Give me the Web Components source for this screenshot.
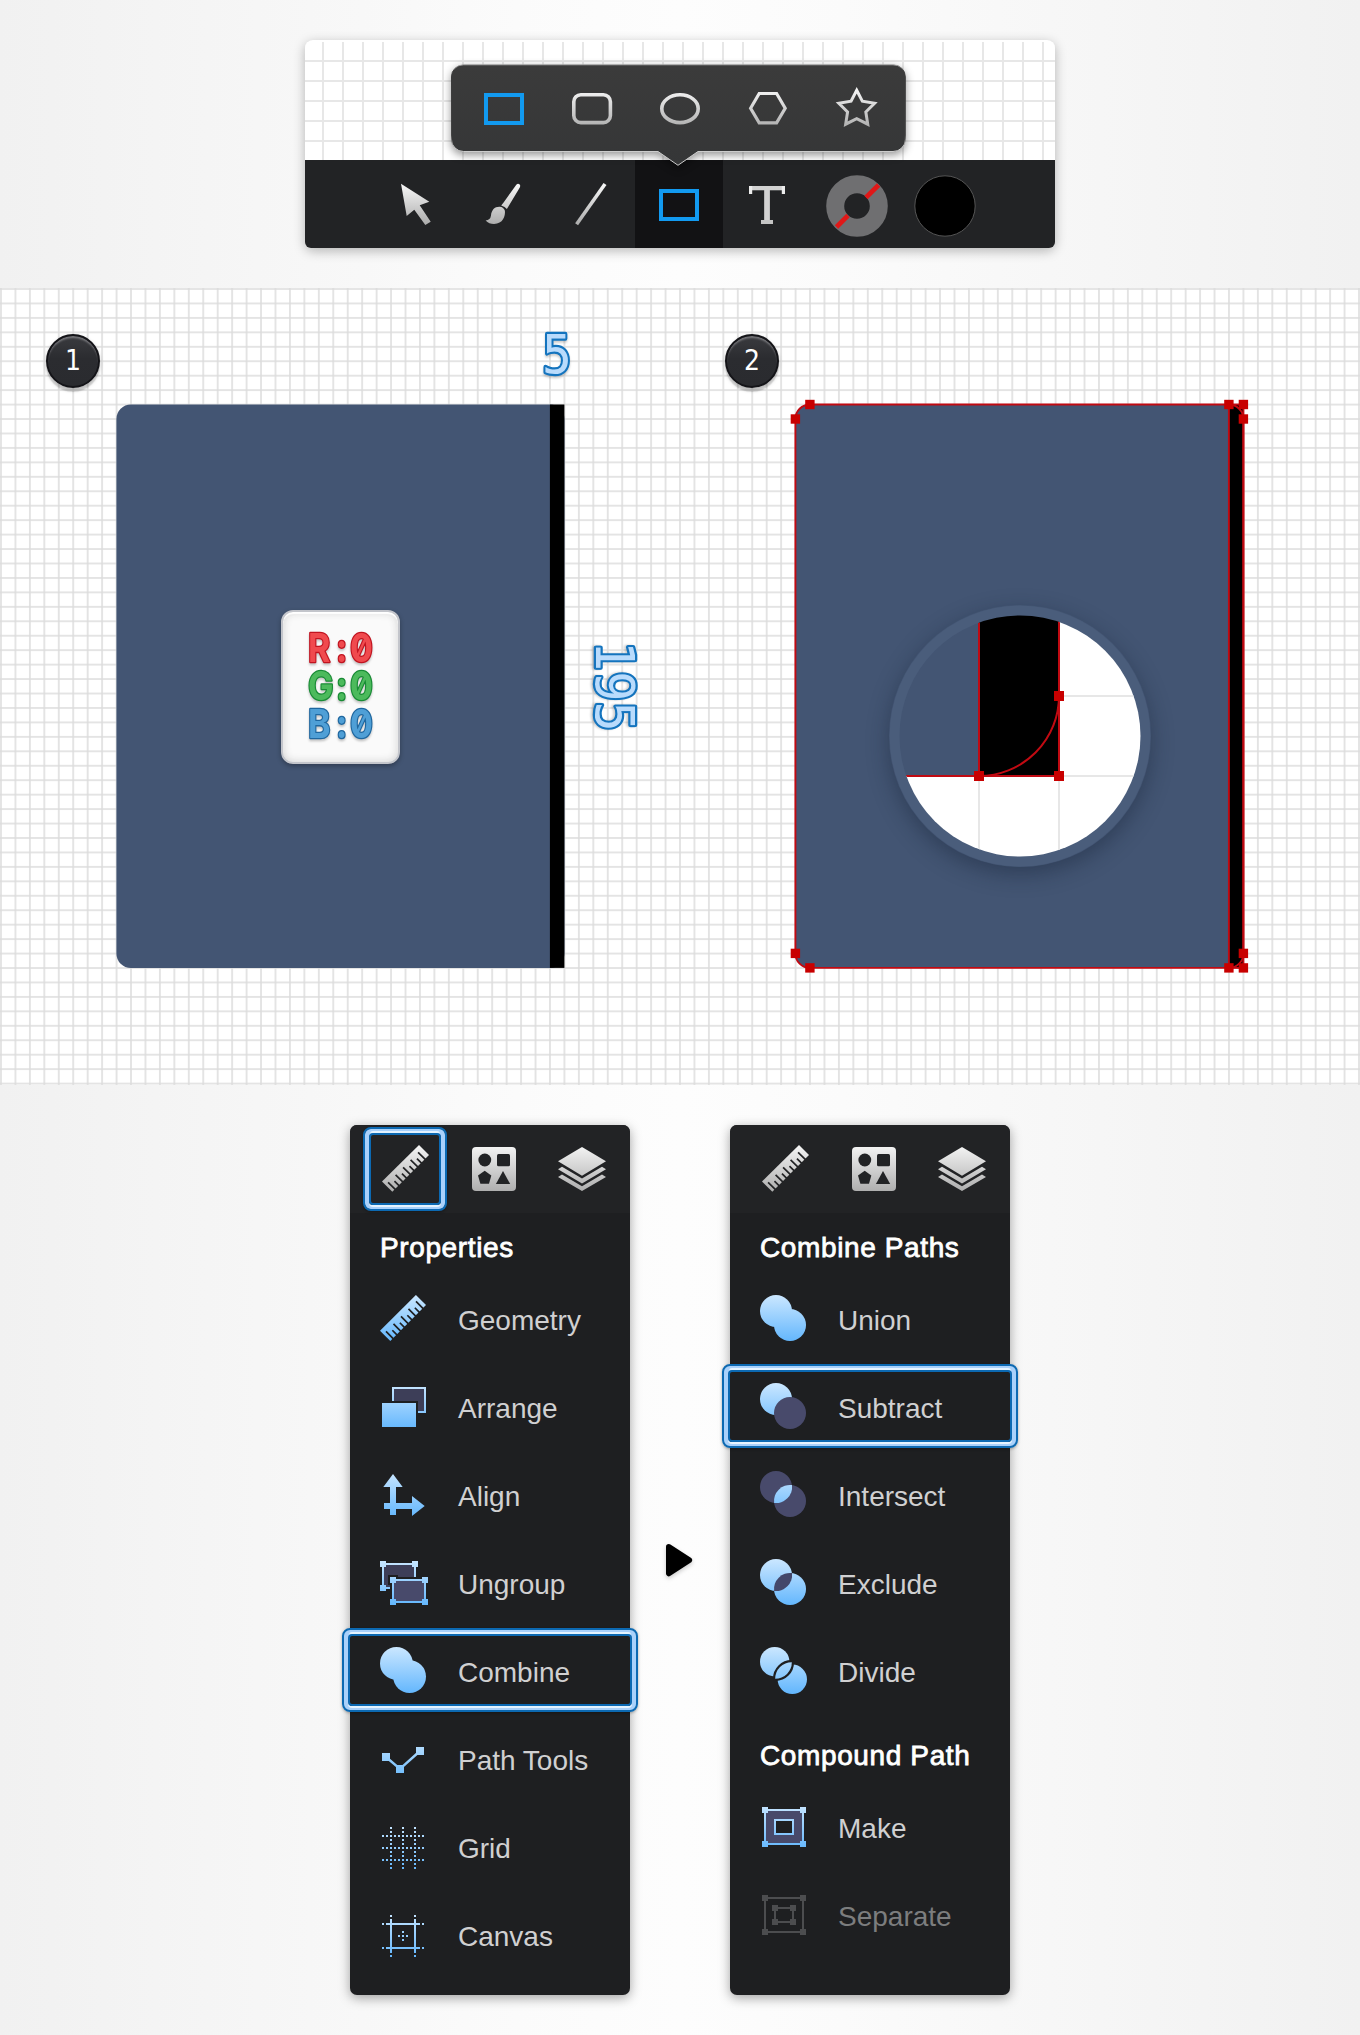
<!DOCTYPE html>
<html lang="en">
<head>
<meta charset="utf-8">
<title>Combine paths</title>
<style>
html{background:#f4f4f4}
body{margin:0;font-family:"Liberation Sans",Arial,sans-serif;background:linear-gradient(90deg,#f1f1f1 0,#fbfbfb 38%,#fdfdfd 50%,#fbfbfb 62%,#f1f1f1 100%)}
</style>
</head>
<body>
<tutorial-page></tutorial-page>
<script>
const define=(name,html,setup)=>customElements.define(name,class extends HTMLElement{
  connectedCallback(){
    if(this.shadowRoot)return;
    const root=this.attachShadow({mode:'open'});
    root.innerHTML=typeof html==='function'?html(this):html;
    if(setup)setup(this,root);
  }
});

const grads=(top,bottom)=>`<defs>
<linearGradient id="s" gradientUnits="userSpaceOnUse" x1="0" y1="${top}" x2="0" y2="${bottom}"><stop offset="0" stop-color="#f4f4f4"/><stop offset="1" stop-color="#adadad"/></linearGradient>
<linearGradient id="b" gradientUnits="userSpaceOnUse" x1="0" y1="${top}" x2="0" y2="${bottom}"><stop offset="0" stop-color="#cbe7ff"/><stop offset="1" stop-color="#64b7fd"/></linearGradient></defs>`;

const starPoints=()=>{
  const p=[];
  for(let i=0;i<10;i++){
    const r=i%2?9.6:18.8,a=-Math.PI/2+i*Math.PI/5;
    p.push((44.7+r*Math.cos(a)).toFixed(2)+','+(45+r*Math.sin(a)).toFixed(2));
  }
  return p.join(' ');
};
const ticks=(x,y)=>{
  let d='';
  for(let k=0;k<9;k++){
    const px=x+2.6+3.75*k,py=y-2.6-3.75*k,l=k%2?4.2:6.8;
    d+=`M${px+.6} ${py+.6}L${px-l} ${py-l}`;
  }
  return d;
};
const nodes=(list,s,fill)=>list.map(([x,y])=>`<rect x="${x-s/2}" y="${y-s/2}" width="${s}" height="${s}" fill="${fill}"/>`).join('');
const lens='M32 15.1A16 16 0 0 0 14.1 32.9A16 16 0 0 0 32 15.1Z';
const BG='#1e1f21';

const small={
  ruler:`<path d="M38 0L48 10L11.3 46.7L1 36.4Z" fill="url(#s)"/><path d="${ticks(11.3,46.7)}" stroke="#222325" stroke-width="1.7"/>`,
  shapes:`<rect x="2" y="2" width="44" height="44" rx="4" fill="url(#s)"/><g fill="#222325"><circle cx="14.8" cy="15" r="6.4"/><rect x="27" y="9" width="13" height="12.3" rx="1.5"/><path d="M14.7 25.7L21.3 30.6L19 38.8H10.4L8 30.6Z"/><path d="M33 26L40.2 39H25.9Z"/></g>`,
  layers:`<g fill="url(#s)"><path d="M24 2L48 16.3L24 30.7L0 16.3Z"/><path d="M0 24.3L4 21.8L24 33.6L44 21.8L48 24.3L24 38.4Z"/><path d="M0 32L4 29.5L24 41.3L44 29.5L48 32L24 46.1Z"/></g>`,
  geometry:`<path d="M35.9 1L46 10.9L10.3 47L0 36.8Z" fill="url(#b)"/><path d="${ticks(10.2,46.8)}" stroke="${BG}" stroke-width="1.7"/>`,
  arrange:`<rect x="13" y="6" width="32" height="24" fill="#3d3e58" stroke="url(#b)" stroke-width="2"/><rect x="0" y="19" width="38" height="28" fill="${BG}"/><rect x="2" y="21" width="34" height="24" fill="url(#b)"/>`,
  align:`<path d="M13 4L22.7 17H16V33H32V26L44.7 36L32 46V39H16V45H10V39H4V33H10V17H3.3Z" fill="url(#b)"/>`,
  ungroup:`<rect x="3" y="6" width="32" height="24" fill="#3d3e58" stroke="url(#b)" stroke-width="2"/>${nodes([[3,6],[35,6],[3,30]],6,'url(#b)')}<path d="M8 17H18V19H48V48H10V27H8Z" fill="${BG}"/><rect x="13" y="22" width="32" height="22" fill="#484a6b" stroke="url(#b)" stroke-width="2"/>${nodes([[13,22],[45,22],[13,44],[45,44]],6,'url(#b)')}`,
  combine:`<g fill="url(#b)"><circle cx="16.4" cy="17.4" r="16.4"/><circle cx="29.6" cy="30.6" r="16.4"/></g>`,
  paths:`<g><path d="M6 23L20 35L40 17" fill="none" stroke="url(#b)" stroke-width="2.4"/>${nodes([[6,23],[20,35],[40,17]],8,'url(#b)')}</g>`,
  grid:`<path d="M11 5V47M23 5V47M35 5V47M2 14.01H44M2 26.01H44M2 38.01H44" stroke="url(#b)" stroke-width="2" stroke-dasharray="2 2"/>`,
  canvas:`<g stroke="url(#b)" stroke-width="2"><path d="M11 9V43M35 9V43M6 14H40M6 38H40"/><path d="M11 5V7M11 45V47M35 5V7M35 45V47M2 14H4M42 14H44M2 38H4M42 38H44"/><path d="M18 26H28M23 21V31" stroke-dasharray="2 2"/></g>`,
  union:`<g fill="url(#b)"><circle cx="16" cy="17" r="16"/><circle cx="30" cy="31" r="16"/></g>`,
  subtract:`<circle cx="16" cy="17" r="16" fill="url(#b)"/><circle cx="30" cy="31" r="16" fill="#484a6b"/>`,
  intersect:`<g fill="#484a6b"><circle cx="16" cy="17" r="16"/><circle cx="30" cy="31" r="16"/></g><path d="${lens}" fill="url(#b)"/>`,
  exclude:`<g fill="url(#b)"><circle cx="16" cy="17" r="16"/><circle cx="30" cy="31" r="16"/></g><path d="${lens}" fill="#44476a"/>`,
  divide:`<g fill="url(#b)"><circle cx="14.7" cy="15.7" r="14.7"/><circle cx="32.3" cy="33.3" r="14.7"/></g><path d="M31.8 16.2A16.4 16.4 0 0 0 15.2 32.8A16.4 16.4 0 0 0 31.8 16.2Z" fill="url(#b)" stroke="${BG}" stroke-width="4.4" paint-order="stroke"/>`,
  make:`<path d="M5 8H43V42H5Z" fill="#484a6b" stroke="url(#b)" stroke-width="2"/><rect x="15" y="18" width="18" height="14" fill="${BG}" stroke="url(#b)" stroke-width="2"/>${nodes([[5,8],[43,8],[5,42],[43,42]],6,'url(#b)')}`,
  separate:`<g fill="none" stroke="#4c4d4f" stroke-width="2"><path d="M5 8H43V42H5Z"/><rect x="15" y="18" width="18" height="14"/></g>${nodes([[5,8],[43,8],[5,42],[43,42],[15,18],[33,18],[15,32],[33,32]],6,'#4c4d4f')}`
};
const large={
  rect:`<rect x="26" y="31" width="36" height="28" fill="none" stroke="#129af0" stroke-width="4"/>`,
  rounded:`<rect x="25.8" y="30.8" width="36.6" height="27.8" rx="7" fill="none" stroke="url(#s)" stroke-width="3.6"/>`,
  ellipse:`<ellipse cx="44" cy="44.7" rx="18.2" ry="13.9" fill="none" stroke="url(#s)" stroke-width="3.6"/>`,
  hexagon:`<path d="M26.6 44.2L35.2 29.5H52.6L61.2 44.2L52.6 58.8H35.2Z" fill="none" stroke="url(#s)" stroke-width="3.2"/>`,
  star:`<polygon points="${starPoints()}" fill="none" stroke="url(#s)" stroke-width="3" stroke-miterlimit="8"/>`,
  cursor:`<path d="M30 23.7L58.3 41.7L48.7 45.3L59.7 61.7L54.3 65L43.3 49.7L35.7 56Z" fill="url(#s)"/>`,
  brush:`<path d="M57.3 24.8Q58.8 23 60.4 24.2Q61.8 25.4 60.8 27.4L49.7 45.9L47.9 49Q46 46.5 42.2 45.4L44.6 42.4Z" fill="url(#s)"/><path d="M40.6 46.7Q44.8 47 45.9 50.8C46.5 56 44 64 35 64Q30 64 26.6 60.5Q31.4 60 32 55.5C32.5 50 35.5 46.6 40.6 46.7Z" fill="url(#s)"/>`,
  line:`<path d="M58 24L29.6 64.3" stroke="url(#s)" stroke-width="3.6"/>`,
  type:`<text transform="translate(44 64) scale(1.12 1)" text-anchor="middle" font-family="Liberation Sans,sans-serif" font-size="55" fill="#d2d2d2">T</text><path d="M26 26H29.2V34H26ZM58.800 26H62V34H58.800Z" fill="#ececec"/><path d="M38 60H50V64H38Z" fill="#c4c4c4"/>`,
  none:`<circle cx="46" cy="46" r="21.8" fill="none" stroke="#6f6f71" stroke-width="18"/><path d="M25.5 67L37 55.5M55 37.5L67.6 25" stroke="#e01818" stroke-width="4.8"/>`,
  fill:`<circle cx="46" cy="46" r="30.2" fill="#000" stroke="#555" stroke-width="1"/>`
};

define('ui-icon',el=>{
  const n=el.getAttribute('name'),big=el.hasAttribute('large'),s=big?88:48;
  return `<style>:host{display:block;flex:none;width:${s}px;height:${s}px}svg{display:block}</style><svg width="${s}" height="${s}" viewBox="0 0 ${s} ${s}">${grads(big?26:1,big?64:47)}${(big?large:small)[n]}</svg>`;
});

define('shape-popover',`<style>
:host{display:block;position:relative;width:455px;height:104px;filter:drop-shadow(0 3px 4px rgba(0,0,0,.42))}
.bg{position:absolute;left:0;top:0}
.row{position:relative;display:flex;padding-left:9px}
</style>
<svg class="bg" width="455" height="104"><defs><linearGradient id="e" x1="0" y1="0" x2="0" y2="1"><stop offset="0" stop-color="#aaa"/><stop offset=".06" stop-color="#3a3a3a"/><stop offset=".7" stop-color="#444"/><stop offset=".82" stop-color="#ccc"/><stop offset="1" stop-color="#ccc"/></linearGradient><linearGradient id="f" x1="0" y1="0" x2="0" y2="1"><stop offset="0" stop-color="#3b3b3b"/><stop offset="1" stop-color="#353637"/></linearGradient></defs>
<path d="M12.5 .8H442A12 12 0 0 1 454.3 13V75.500A12 12 0 0 1 442 87.500H247L227 101.300L207 87.500H12.500A12 12 0 0 1 .5 75.500V13A12 12 0 0 1 12.500 .8Z" fill="url(#f)" stroke="url(#e)"/></svg>
<div class="row"><ui-icon large name="rect"></ui-icon><ui-icon large name="rounded"></ui-icon><ui-icon large name="ellipse"></ui-icon><ui-icon large name="hexagon"></ui-icon><ui-icon large name="star"></ui-icon></div>`);

define('tool-bar',`<style>
:host{display:block;position:relative;width:750px;height:208px;border-radius:8px;box-shadow:0 3px 12px rgba(0,0,0,.28)}
.grid{height:120px;border-radius:8px 8px 0 0;background:linear-gradient(90deg,#e7e7e7 2px,transparent 2px) 17px 0/20px 20px,linear-gradient(#e7e7e7 2px,transparent 2px) 0 0/20px 20px,#fff;box-shadow:inset 0 2px 0 #fff}
.bar{display:flex;height:88px;padding-left:66px;background:#222325;border-radius:0 0 6px 6px}
.on{background:#121214}
shape-popover{position:absolute;left:146px;top:24px}
</style><div class="grid"></div><div class="bar"><ui-icon large name="cursor"></ui-icon><ui-icon large name="brush"></ui-icon><ui-icon large name="line"></ui-icon><ui-icon large name="rect" class="on"></ui-icon><ui-icon large name="type"></ui-icon><ui-icon large name="none"></ui-icon><ui-icon large name="fill"></ui-icon></div><shape-popover></shape-popover>`);

define('step-badge',`<style>
:host{display:flex;box-sizing:border-box;width:54px;height:54px;border-radius:50%;align-items:center;justify-content:center;color:#fff;font:28px/1 "DejaVu Sans Condensed","DejaVu Sans",sans-serif;font-stretch:condensed;background:linear-gradient(#3a3b3f,#2b2c30 45%,#2a2b2f);border:2px solid #141418;box-shadow:inset 0 3px 2px -1px #77777b,0 4px 1px rgba(0,0,0,.13),0 2px 4px rgba(0,0,0,.2)}
</style><slot></slot>`);

define('size-label',el=>{
  const v=el.hasAttribute('vertical'),t=el.getAttribute('value');
  return `<style>:host{display:block}svg{display:block;overflow:visible}text{font:54px "DejaVu Sans Mono",monospace;paint-order:stroke}</style>
<svg width="${v?50:30}" height="${v?92:50}"><g transform="${v?'translate(4 0) rotate(90) scale(.93 1)':'translate(0 44) scale(.92 1)'}" style="filter:drop-shadow(0 2px 1px rgba(0,0,0,.2))"><text fill="#b9dbfc" stroke="#1474be" stroke-width="4.4" stroke-linejoin="round">${t}</text></g></svg>`;
});

define('colour-card',()=>{
  const line=(y,l,c,d)=>`<text transform="translate(0 ${y}) scale(.85 1)" x="0 33 49.3" fill="${c}" stroke="${d}">${l}:0</text>`;
  return `<style>:host{display:block;box-sizing:border-box;width:119px;height:154px;border-radius:12px;background:#fafafa;border:2px solid #c3c5cb;box-shadow:inset 0 2px 1px #fff,inset 0 0 8px #cfcfcf,0 2px 5px rgba(0,0,0,.3)}svg{display:block;margin:0 0 0 25px;overflow:visible;filter:drop-shadow(0 2px 1px rgba(0,0,0,.22))}text{font:bold 40px Inter,"DejaVu Sans Mono",sans-serif;font-feature-settings:"zero" 1,"case" 0,"calt" 0;stroke-width:2.6px;paint-order:stroke;stroke-linejoin:round}</style>
<svg width="66" height="148">${line(49.500,'R','#f04a4e','#c11420')}${line(87.500,'G','#4cba5c','#198b35')}${line(125.500,'B','#4f9fd6','#1f679f')}</svg>`;
});

define('artboard-shape',el=>{
  const o=el.hasAttribute('outlined'),r=14.5,w=448,h=563.4;
  const n=[[r,0],[0,r],[0,h-r],[r,h],[w-r,0],[w,0],[w,r],[w-r,h],[w,h],[w,h-r]];
  return `<style>:host{display:block}svg{display:block;overflow:visible}</style><svg width="448" height="564"><g transform="translate(.4 .5)">
<rect width="${w}" height="${h}" rx="${r}" fill="#435573"/><rect x="${w-r}" width="${r}" height="${h}"/>
${o?`<g fill="none" stroke="#c10a12" stroke-width="1.9"><rect width="${w}" height="${h}" rx="${r}"/><rect x="${w-r}" width="${r}" height="${h}"/></g>${nodes(n,9.4,'#c80000')}`:''}</g></svg>`;
});

define('corner-loupe',`<style>:host{display:block;width:262px;height:262px;border-radius:50%;box-shadow:0 7px 22px rgba(20,30,50,.42)}svg{display:block}</style>
<svg width="262" height="262"><defs><clipPath id="c"><circle cx="131" cy="131" r="120.500"/></clipPath></defs>
<circle cx="131" cy="131" r="130.400" fill="#4a5d7b"/><g clip-path="url(#c)"><path d="M170 0H262V262H0V171H170Z" fill="#fff"/><path d="M90 171V262M170 171V262M170 91H262M170 171H262" stroke="#e7e7e7" stroke-width="2"/><rect width="90" height="171" fill="#435573"/><rect x="90" width="80" height="171"/><path d="M0 171H170V0M90 0V171M170 91A80 80 0 0 1 90 171" fill="none" stroke="#c10a12" stroke-width="2"/>${nodes([[90,171],[170,171],[170,91]],10,'#c80000')}</g></svg>`);

define('drawing-board',`<style>
:host{display:block;position:relative;height:797px;background:#fff;overflow:hidden}
:host>*{position:absolute}
.grid,step-badge,artboard-shape,colour-card,size-label,corner-loupe{position:absolute}
.grid{left:0;top:0}
</style>
<svg class="grid" width="1360" height="797"><defs><pattern id="p" patternUnits="userSpaceOnUse" x="1" y="1" width="14.447" height="14.447"><path d="M0 0H14.447M0 0V14.447M14.447 0V14.447M0 14.447H14.447" stroke="#dcdcdc" stroke-width="1.500"/></pattern></defs><rect width="1360" height="797" fill="url(#p)"/></svg>
<step-badge style="left:46px;top:46px">1</step-badge>
<step-badge style="left:725px;top:46px">2</step-badge>
<artboard-shape style="left:116px;top:116px"></artboard-shape>
<colour-card style="left:281px;top:322px"></colour-card>
<size-label value="5" style="left:542px;top:41px"></size-label>
<size-label vertical value="195" style="left:592px;top:353px"></size-label>
<artboard-shape outlined style="left:795px;top:116px"></artboard-shape>
<corner-loupe style="left:889px;top:317px"></corner-loupe>`);

define('select-frame',`<style>:host{display:block;box-sizing:border-box;border:2px solid #0c69b2;border-radius:8px;background:transparent;box-shadow:inset 0 0 0 4px #a9d1fb,inset 0 2px 0 4px #a9d1fb,0 1px 3px rgba(0,0,0,.3);padding:4px}
i{display:block;box-sizing:border-box;height:100%;border:2px solid #0c69b2;border-radius:4px;box-shadow:0 2px 0 #e4f3ff,0 -3px 0 -1px #e4f3ff}</style><i></i>`);

define('panel-row',el=>`<style>
:host{display:flex;position:relative;height:88px;align-items:center;padding-left:30px;font-size:28px;line-height:32px;color:#d0d0d1}
:host([disabled]){color:#7c7d7e}
span{padding:5px 0 0 30px}
select-frame{position:absolute;left:-8px;top:2px;width:296px;height:84px}
</style><ui-icon name="${el.getAttribute('icon')}"></ui-icon><span><slot></slot></span>${el.hasAttribute('selected')?'<select-frame></select-frame>':''}`);

define('panel-heading',`<style>
:host{display:flex;height:61px;box-sizing:border-box;padding:19px 0 0 30px;font-size:28px;line-height:32px;letter-spacing:.62px;color:#fff;-webkit-text-stroke:.8px #fff}
:host([spaced]){margin-top:7px}
</style><slot></slot>`);

define('side-panel',el=>`<style>
:host{display:block;box-sizing:border-box;width:280px;height:870px;border-radius:7px;background:${BG};box-shadow:0 3px 12px rgba(0,0,0,.36)}
header{display:grid;grid-template-columns:90px 88px 88px;height:88px;padding-left:10px;box-sizing:border-box;align-items:center;justify-items:center;background:#222325;border-radius:7px 7px 0 0;position:relative}
select-frame{position:absolute;left:13px;top:2px;width:84px;height:84px}
</style><header><ui-icon name="ruler"></ui-icon><ui-icon name="shapes"></ui-icon><ui-icon name="layers"></ui-icon>${el.hasAttribute('tab')?'<select-frame></select-frame>':''}</header><slot></slot>`);

define('tutorial-page',`<style>
:host{display:flex;flex-direction:column;height:2035px;overflow:hidden}
.top{display:flex;justify-content:center;box-sizing:border-box;height:288px;padding-top:40px}
.panels{display:flex;justify-content:center;padding-top:40px}
.next{display:flex;width:100px;height:870px;align-items:center;justify-content:center;box-sizing:border-box;padding-right:2px}
.next svg{display:block;filter:drop-shadow(0 2px 2px rgba(0,0,0,.2))}
</style>
<div class="top"><tool-bar></tool-bar></div>
<drawing-board></drawing-board>
<div class="panels">
<side-panel tab><panel-heading>Properties</panel-heading>
<panel-row icon="geometry">Geometry</panel-row><panel-row icon="arrange">Arrange</panel-row><panel-row icon="align">Align</panel-row><panel-row icon="ungroup">Ungroup</panel-row><panel-row icon="combine" selected>Combine</panel-row><panel-row icon="paths">Path Tools</panel-row><panel-row icon="grid">Grid</panel-row><panel-row icon="canvas">Canvas</panel-row></side-panel>
<div class="next"><svg width="28" height="36"><path d="M3 4L24.500 18L3 32Z" stroke="#000" stroke-width="6" stroke-linejoin="round" transform="translate(1 1) scale(.95)"/></svg></div>
<side-panel><panel-heading>Combine Paths</panel-heading>
<panel-row icon="union">Union</panel-row><panel-row icon="subtract" selected>Subtract</panel-row><panel-row icon="intersect">Intersect</panel-row><panel-row icon="exclude">Exclude</panel-row><panel-row icon="divide">Divide</panel-row>
<panel-heading spaced>Compound Path</panel-heading><panel-row icon="make">Make</panel-row><panel-row icon="separate" disabled>Separate</panel-row></side-panel>
</div>`);
</script>
</body>
</html>
